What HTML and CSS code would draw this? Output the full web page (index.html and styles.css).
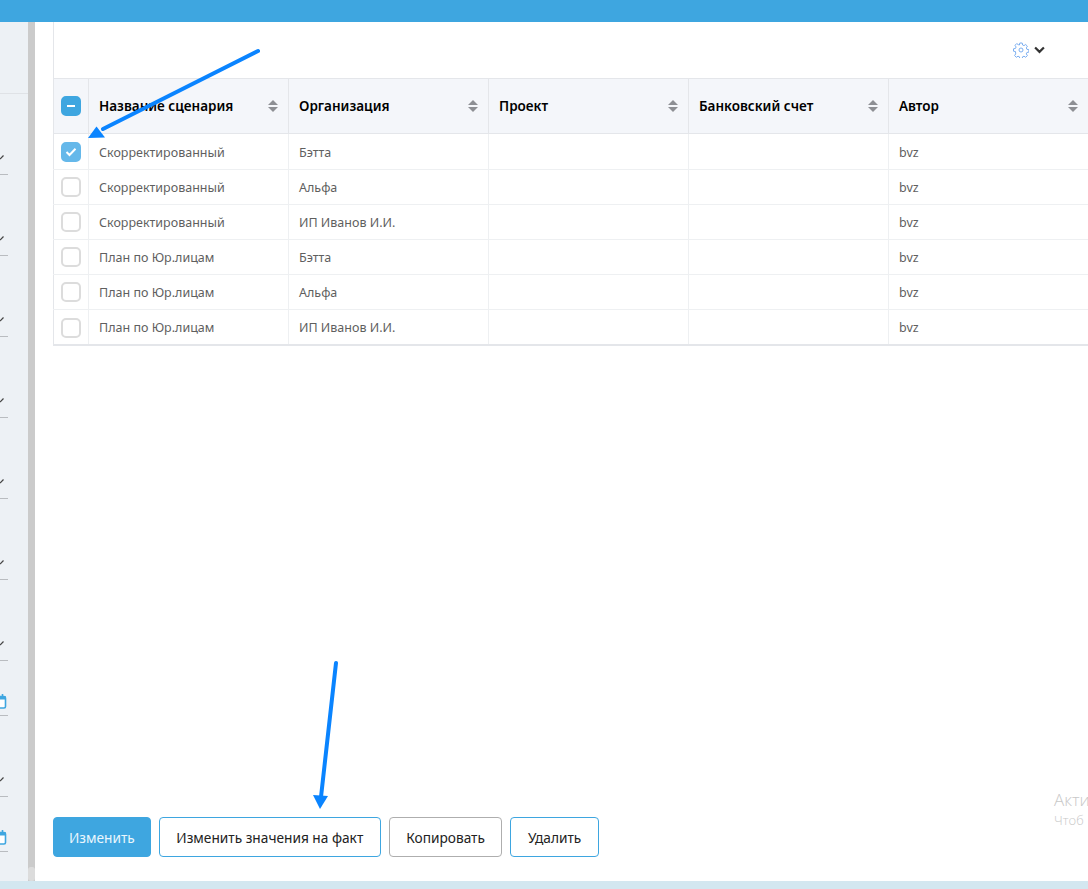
FILE: index.html
```html
<!DOCTYPE html>
<html lang="ru">
<head>
<meta charset="utf-8">
<title>Сценарии</title>
<link rel="stylesheet" href="styles.css">
</head>
<body>
<div class="topbar"></div>
<div class="middle">
  <aside class="sidebar">
    <div class="side-top"></div>
    <div class="field"><svg class="chev" viewBox="0 0 4 5"><path d="M0 4 3.500 0.500"/></svg></div>
    <div class="field"><svg class="chev" viewBox="0 0 4 5"><path d="M0 4 3.500 0.500"/></svg></div>
    <div class="field"><svg class="chev" viewBox="0 0 4 5"><path d="M0 4 3.500 0.500"/></svg></div>
    <div class="field"><svg class="chev" viewBox="0 0 4 5"><path d="M0 4 3.500 0.500"/></svg></div>
    <div class="field"><svg class="chev" viewBox="0 0 4 5"><path d="M0 4 3.500 0.500"/></svg></div>
    <div class="field"><svg class="chev" viewBox="0 0 4 5"><path d="M0 4 3.500 0.500"/></svg></div>
    <div class="field"><svg class="chev" viewBox="0 0 4 5"><path d="M0 4 3.500 0.500"/></svg></div>
    <div class="field field-date"><svg class="cal" viewBox="0 0 7 16"><path d="M-6 3.500H4A1.500 1.500 0 0 1 5.500 5V13.500A1.500 1.500 0 0 1 4 15H-6Z"/><path class="cal-top" d="M-6 3H5.500V6.500H-6Z"/><path class="cal-pin" d="M2.500 1V3.500"/></svg></div>
    <div class="field"><svg class="chev" viewBox="0 0 4 5"><path d="M0 4 3.500 0.500"/></svg></div>
    <div class="field field-date"><svg class="cal" viewBox="0 0 7 16"><path d="M-6 3.500H4A1.500 1.500 0 0 1 5.500 5V13.500A1.500 1.500 0 0 1 4 15H-6Z"/><path class="cal-top" d="M-6 3H5.500V6.500H-6Z"/><path class="cal-pin" d="M2.500 1V3.500"/></svg></div>
  </aside>
  <div class="scrollbar"><div class="scroll-thumb"></div></div>
  <main class="content">
    <div class="toolbar">
      <svg class="gear" viewBox="0 0 16 16"><circle cx="8" cy="8" r="2"/><path d="M6.800 1h2.400l.4 2 1.400.6 1.700-1.100 1.700 1.700-1.100 1.700.6 1.400 2 .4v2.400l-2 .4-.6 1.400 1.100 1.700-1.700 1.700-1.700-1.100-1.400.6-.4 2H6.800l-.4-2-1.400-.6-1.700 1.100-1.700-1.700 1.100-1.700L2.500 9.600l-2-.4V6.800l2-.4.6-1.400L2 3.300 3.700 1.600l1.700 1.100L6.400 3z"/></svg>
      <svg class="caret" viewBox="0 0 10 7"><path d="M1 1.200 5 5.200 9 1.200"/></svg>
    </div>
    <div class="table-wrap">
      <table class="grid">
        <colgroup><col class="c-check"><col class="c-data"><col class="c-data"><col class="c-data"><col class="c-data"><col class="c-data"></colgroup>
        <thead>
          <tr>
            <th class="cell-check"><span class="box box-mixed"><i class="dash"></i></span></th>
            <th><div class="head"><span>Название сценария</span><span class="sort"><i class="up"></i><i class="down"></i></span></div></th>
            <th><div class="head"><span>Организация</span><span class="sort"><i class="up"></i><i class="down"></i></span></div></th>
            <th><div class="head"><span>Проект</span><span class="sort"><i class="up"></i><i class="down"></i></span></div></th>
            <th><div class="head"><span>Банковский счет</span><span class="sort"><i class="up"></i><i class="down"></i></span></div></th>
            <th><div class="head"><span>Автор</span><span class="sort"><i class="up"></i><i class="down"></i></span></div></th>
          </tr>
        </thead>
        <tbody>
          <tr class="row-first"><td class="cell-check"><span class="box box-on"><svg viewBox="0 0 12 10"><path d="M1.500 5 4.500 8 10.500 1.800"/></svg></span></td><td>Скорректированный</td><td>Бэтта</td><td></td><td></td><td>bvz</td></tr>
          <tr><td class="cell-check"><span class="box"></span></td><td>Скорректированный</td><td>Альфа</td><td></td><td></td><td>bvz</td></tr>
          <tr><td class="cell-check"><span class="box"></span></td><td>Скорректированный</td><td>ИП Иванов И.И.</td><td></td><td></td><td>bvz</td></tr>
          <tr><td class="cell-check"><span class="box"></span></td><td>План по Юр.лицам</td><td>Бэтта</td><td></td><td></td><td>bvz</td></tr>
          <tr><td class="cell-check"><span class="box"></span></td><td>План по Юр.лицам</td><td>Альфа</td><td></td><td></td><td>bvz</td></tr>
          <tr class="row-last"><td class="cell-check"><span class="box"></span></td><td>План по Юр.лицам</td><td>ИП Иванов И.И.</td><td></td><td></td><td>bvz</td></tr>
        </tbody>
      </table>
    </div>
    <div class="actions">
      <button class="btn btn-primary">Изменить</button>
      <button class="btn">Изменить значения на факт</button>
      <button class="btn btn-grey">Копировать</button>
      <button class="btn">Удалить</button>
    </div>
  </main>
</div>
<div class="bottom-strip"></div>
<div class="watermark"><div class="wm-title">Акти</div><div class="wm-sub">Чтоб</div></div>
<svg class="arrows" viewBox="0 0 1088 889">
  <path class="shaft" d="M258 51 103 129"/>
  <path class="head-a" d="M88 138 96.500 126.500 105 137.500Z"/>
  <path class="shaft" d="M336 663 321 797"/>
  <path class="head-a" d="M320 809 313 795 328 796Z"/>
</svg>
</body>
</html>
```
FILE: styles.css
```css
* { box-sizing: border-box; }
html, body { margin: 0; padding: 0; }
body {
  width: 1088px;
  height: 889px;
  overflow: hidden;
  position: relative;
  display: flex;
  flex-direction: column;
  background: #fff;
  font-family: "Noto Sans", "Liberation Sans", sans-serif;
  color: #5f5f5f;
}
.topbar { height: 22px; flex: none; background: #3ea6e0; }
.middle { flex: 1; display: flex; min-height: 0; }
.sidebar { width: 28px; flex: none; background: #edf1f5; }
.side-top { height: 72px; border-bottom: 1px solid #dfe2e6; }
.field {
  width: 8px;
  height: 81px;
  border-bottom: 1px solid #b9bcc0;
  display: flex;
  align-items: flex-end;
  justify-content: flex-start;
  padding-bottom: 14px;
}
.field-date { height: 55px; padding-bottom: 0; }
.chev { width: 4px; height: 5px; fill: none; stroke: #444; stroke-width: 1.200; }
.cal { width: 7px; height: 16px; flex: none; margin-bottom: 6px; fill: #fff; stroke: #3ea6e0; stroke-width: 1.600; overflow: hidden; }
.cal-top { fill: #3ea6e0; stroke: none; }
.cal-pin { fill: none; }
.scrollbar { width: 7px; flex: none; background: #cbcbcb; display: flex; align-items: flex-end; }
.scroll-thumb { width: 7px; height: 14px; background: #dcdcdc; border-radius: 3px; }
.content { flex: 1; min-width: 0; padding-left: 18px; display: flex; flex-direction: column; overflow: hidden; }
.toolbar {
  height: 56px;
  flex: none;
  border-left: 1px solid #e4e6ea;
  display: flex;
  align-items: center;
  justify-content: flex-end;
  gap: 5px;
  padding: 0 43px 1px 0;
}
.gear { width: 16px; height: 16px; fill: none; stroke: #6ea6ee; stroke-width: 0.900; }
.caret { width: 11px; height: 8px; fill: none; stroke: #333; stroke-width: 2; }
.table-wrap { flex: none; width: 1035px; }
.grid { border-collapse: collapse; table-layout: fixed; width: 1035px; font-size: 12.500px; border-bottom: 2px solid #e4e6ea; }
.c-check { width: 35px; }
.c-data { width: 200px; }
.grid th {
  height: 55px;
  padding: 0 10px;
  background: #f4f6fa;
  border: 1px solid #e4e6ea;
  border-width: 1px 1px 1px 0;
  color: #000;
  font-weight: 600;
  font-size: 13.500px;
  text-align: left;
}
.grid th.cell-check, .grid td.cell-check { padding: 0; text-align: center; border-left: 1px solid #e4e6ea; }
.grid td {
  height: 35px;
  padding: 0 10px;
  border-bottom: 1px solid #eef0f2;
  border-right: 1px solid #eef0f2;
  white-space: nowrap;
}
.grid .row-first td { height: 36px; }
.grid .row-first td:not(.cell-check) { padding-top: 2px; }
.grid .row-last td, .grid .row-last td.cell-check { padding-top: 2px; }
.head { display: flex; align-items: center; justify-content: space-between; }
.sort { display: flex; flex-direction: column; gap: 2px; width: 10px; flex: none; }
.up, .down { display: block; width: 0; height: 0; border-left: 5px solid transparent; border-right: 5px solid transparent; }
.up { border-bottom: 5px solid #8d8f94; }
.down { border-top: 5px solid #8d8f94; }
.box {
  display: inline-flex;
  align-items: center;
  justify-content: center;
  vertical-align: middle;
  width: 20px;
  height: 20px;
  border: 2px solid #dcdcdc;
  border-radius: 5px;
  background: #fff;
}
.box-mixed { background: #3ea6e0; border-color: #3ea6e0; }
.dash { display: block; width: 8px; height: 2px; background: #fff; }
.box-on { background: #65b8ea; border-color: #65b8ea; }
.box-on svg { width: 12px; height: 10px; fill: none; stroke: #fff; stroke-width: 2; }
.actions { margin-top: auto; display: flex; gap: 8px; padding-bottom: 24px; }
.btn {
  height: 40px;
  padding: 0 16.500px;
  background: #fff;
  border: 1px solid #3ea6e0;
  border-radius: 4px;
  font: 400 13.700px "Noto Sans", "Liberation Sans", sans-serif;
  color: #222;
}
.btn-primary { background: #3ea6e0; color: #eaf6fd; padding: 0 15px; }
.btn-grey { border-color: #aeaeae; }
.bottom-strip { height: 8px; flex: none; background: #d3e7f0; }
.watermark { position: absolute; left: 1054px; top: 788px; white-space: nowrap; color: #c8c8c8; font-family: "Open Sans", sans-serif; font-weight: 300; }
.wm-title { font-size: 17px; line-height: 24px; }
.wm-sub { font-size: 13px; line-height: 17px; }
.arrows { position: absolute; left: 0; top: 0; width: 1088px; height: 889px; pointer-events: none; }
.shaft { fill: none; stroke: #0a84ff; stroke-width: 4; stroke-linecap: round; }
.head-a { fill: #0a84ff; }
```
